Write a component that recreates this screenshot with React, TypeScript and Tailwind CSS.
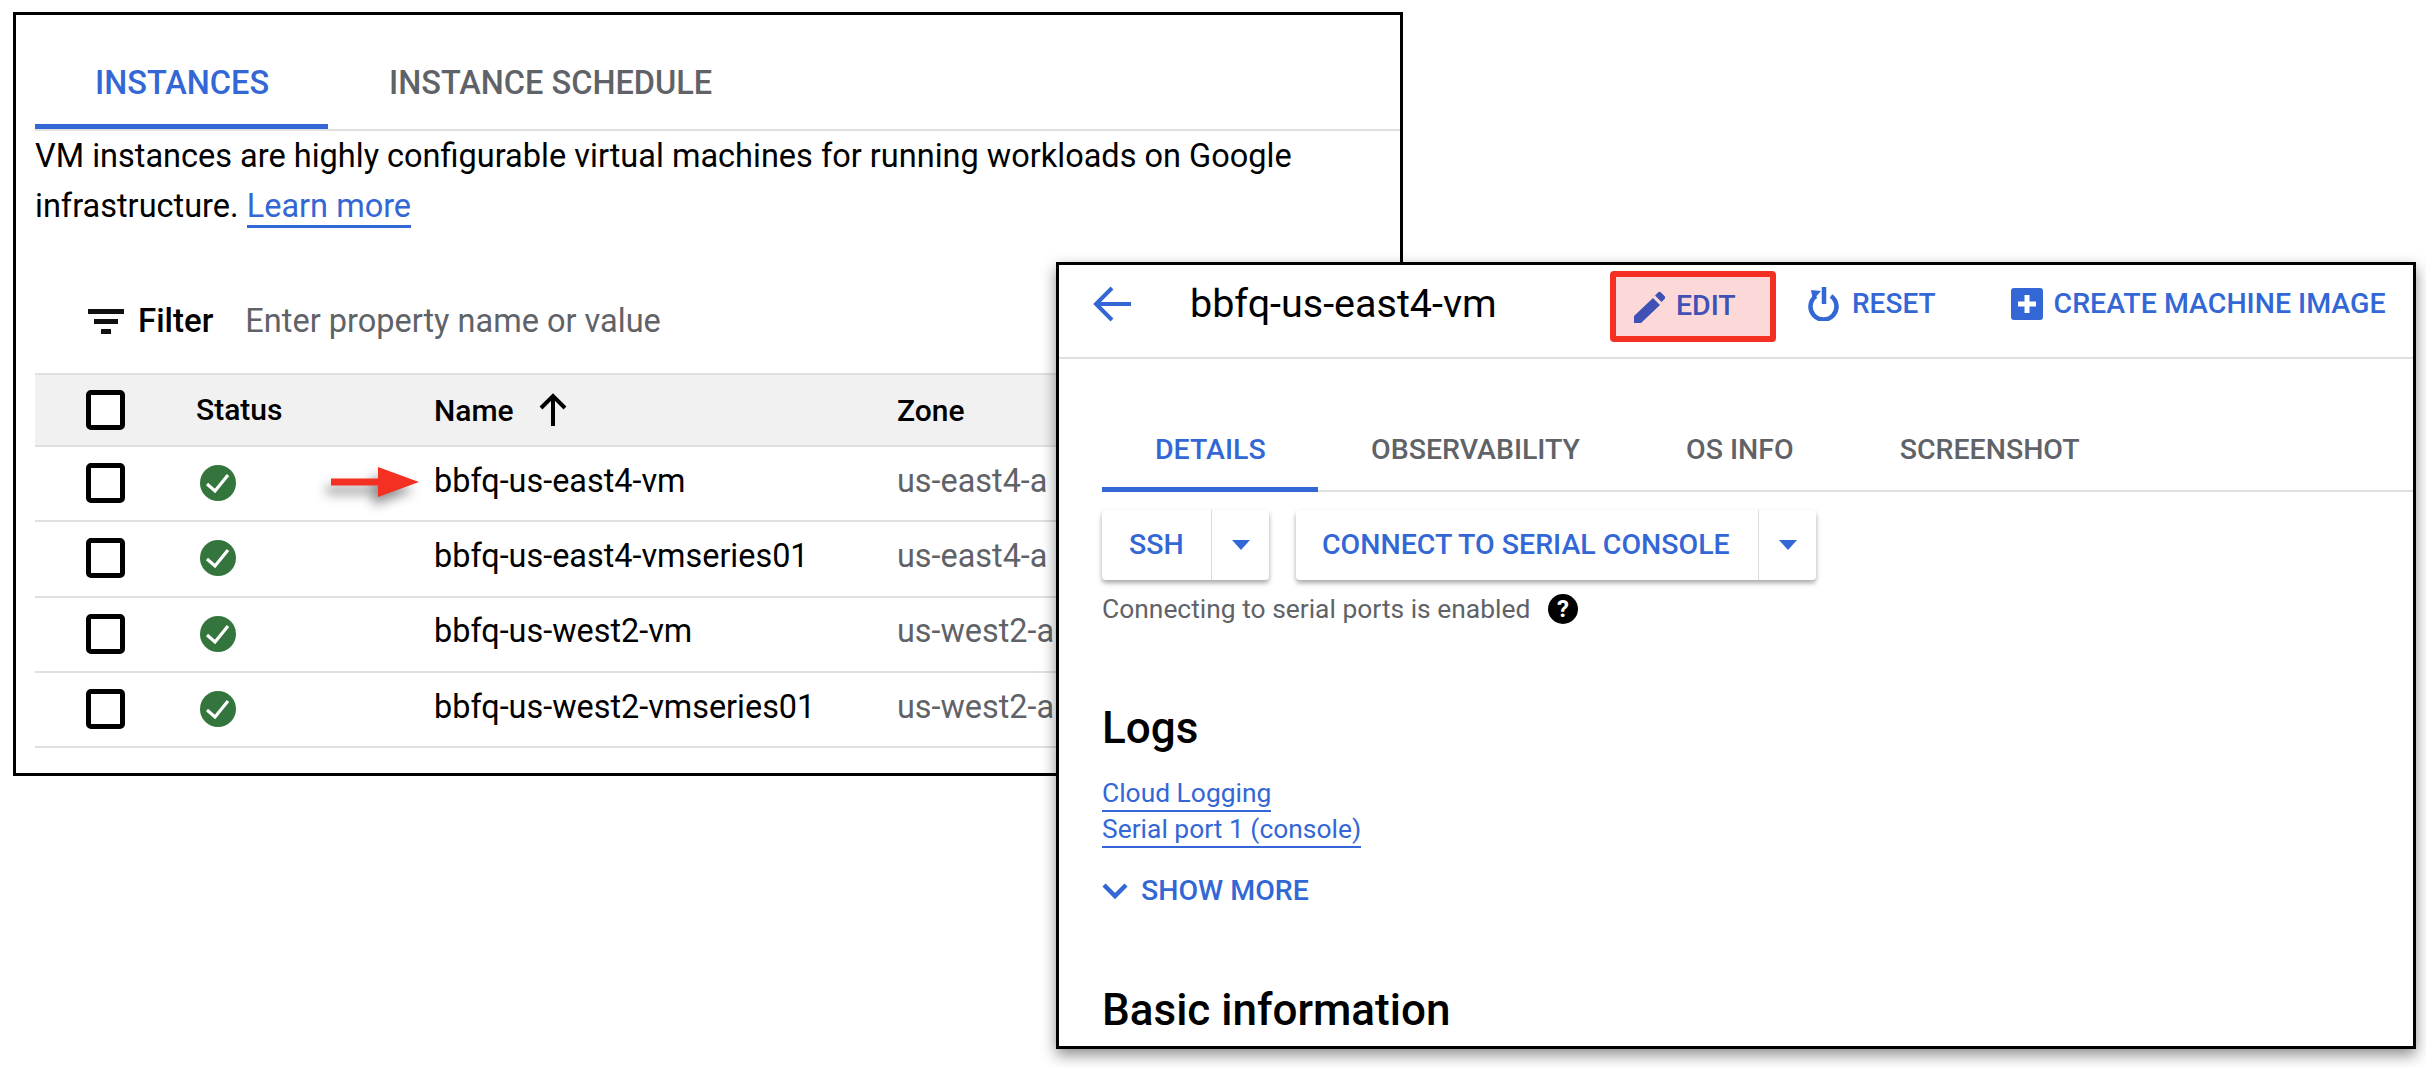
import React from "react";

const BLUE = "text-[#3367d6]";

function Checkbox() {
  return <div className="w-[39px] h-[40px] -mt-[1px] border-[5px] border-black rounded-[5px] bg-white" />;
}

function Ok() {
  return (
    <svg width="36" height="36" viewBox="0 0 36 36">
      <circle cx="18" cy="18" r="18" fill="#33753d" />
      <path d="M7 19l8 7 13-16" fill="none" stroke="#fff" strokeWidth="3.2" />
    </svg>
  );
}

function Row({ name, zone, arrow }: { name: string; zone: string; arrow?: boolean }) {
  return (
    <div className="relative flex items-center h-[75.3px] border-b-2 border-[#e0e0e0]">
      <div className="w-[165px] pl-[51px] flex"><Checkbox /></div>
      <div className="w-[234px] -mt-[1px]"><Ok /></div>
      {arrow && (
        <svg className="absolute left-[296px] top-[15px] overflow-visible drop-shadow-[-5px_8px_6px_rgba(0,0,0,0.45)]" width="90" height="40" viewBox="0 0 90 40">
          <path d="M0 16.5h47V5l41 15-41 15V23.5H0z" fill="#f33021" />
        </svg>
      )}
      <div className="w-[463px] pb-[5px] text-[32.4px] text-black whitespace-nowrap">{name}</div>
      <div className="pb-[5px] text-[32.4px] text-[#5f6368] whitespace-nowrap">{zone}</div>
    </div>
  );
}

function SplitButton({ label, w, sw, px }: { label: string; w: string; sw: string; px: string }) {
  return (
    <div className={`flex h-[70px] rounded-[4px] bg-white shadow-[0_3px_5px_rgba(0,0,0,0.35)] ${w}`}>
      <div className={`flex items-center border-r border-[#dadce0] text-[28.5px] font-medium whitespace-nowrap ${BLUE} ${sw} ${px}`}>{label}</div>
      <div className="flex-1 flex items-center justify-center">
        <svg width="18" height="10" viewBox="0 0 18 10"><path d="M0 0h18L9 10z" fill="#3367d6" /></svg>
      </div>
    </div>
  );
}

export default function App() {
  return (
    <div className="relative w-[2426px] h-[1068px] bg-white overflow-hidden font-['Roboto',sans-serif]">
      <div className="pt-[12px] pl-[13px]">
        <div className="w-[1390px] h-[764px] border-[3px] border-black pl-[19px] overflow-hidden">
          <div className="flex h-[116px] border-b-2 border-[#e0e0e0]">
            <div className={`relative w-[293px] pt-[44px] pl-[60px] text-[32.5px] font-medium ${BLUE}`}>
              INSTANCES
              <div className="absolute left-0 right-0 bottom-0 h-[5px] bg-[#3367d6]" />
            </div>
            <div className="pt-[44px] pl-[61px] text-[32.5px] font-medium text-[#5f6368]">INSTANCE SCHEDULE</div>
          </div>
          <div className="text-[32.5px] leading-[50px] text-black whitespace-nowrap">
            VM instances are highly configurable virtual machines for running workloads on Google
            <br />
            infrastructure. <span className={`${BLUE} border-b-[3px] border-[#3367d6]`}>Learn more</span>
          </div>
          <div className="flex items-center h-[142px] pl-[53px] pt-[38px]">
            <svg width="36" height="26" viewBox="0 0 36 26"><path d="M0 1h36v5H0zM6 11h24v5H6zM13 21h10v5H13z" fill="#111" /></svg>
            <span className="ml-[14px] text-[33px] font-medium text-black">Filter</span>
            <span className="ml-[32px] text-[32.5px] text-[#5f6368]">Enter property name or value</span>
          </div>
          <div className="flex items-center h-[74px] bg-[#f1f1f1] border-y-2 border-[#e0e0e0] text-[30px] font-medium text-black">
            <div className="w-[165px] pl-[51px] flex"><Checkbox /></div>
            <div className="w-[234px] -ml-[4px] pb-[1px]">Status</div>
            <div className="w-[463px] ml-[4px] flex items-center">
              Name
              <svg className="ml-[24px]" width="30" height="34" viewBox="0 0 30 34"><path d="M15 33V3M3 15L15 3l12 12" fill="none" stroke="#000" strokeWidth="4" /></svg>
            </div>
            <div>Zone</div>
          </div>
          <Row name="bbfq-us-east4-vm" zone="us-east4-a" arrow />
          <Row name="bbfq-us-east4-vmseries01" zone="us-east4-a" />
          <Row name="bbfq-us-west2-vm" zone="us-west2-a" />
          <Row name="bbfq-us-west2-vmseries01" zone="us-west2-a" />
        </div>
      </div>

      <div className="absolute left-[1056px] top-[262px] w-[1360px] h-[787px] bg-white border-[3px] border-black shadow-[0_6px_14px_rgba(0,0,0,0.45)] overflow-hidden">
        <div className="flex items-center h-[94px] pb-[14px] border-b-2 border-[#e0e0e0]">
          <svg className="ml-[34px]" width="38" height="36" viewBox="0 0 38 36"><path d="M38 18H4M19 2L3 18l16 16" fill="none" stroke="#3367d6" strokeWidth="4" /></svg>
          <span className="ml-[59px] w-[420px] text-[39.5px] text-black whitespace-nowrap">bbfq-us-east4-vm</span>
          <div className="flex items-center shrink-0 w-[166px] h-[71px] mt-[5px] bg-[#fdd8d8] border-[6px] border-[#f33021] rounded-[4px] pl-[18px]">
            <svg width="31" height="32" viewBox="0 0 31 32"><path d="M0 32v-7L19 7l7 7L7 32zM21 4.5l3-3a2 2 0 0 1 3 0l3.500 3.500a2 2 0 0 1 0 3l-3 3z" fill="#3f51b5" /></svg>
            <span className="ml-[11px] text-[28.5px] font-medium text-[#3f51b5]">EDIT</span>
          </div>
          <svg className="ml-[32px]" width="32" height="34" viewBox="0 0 32 34"><path d="M23 9a13 13 0 1 1-15 0M16 0v17" fill="none" stroke="#3367d6" strokeWidth="4.500" /><path d="M3 3l10 1-8 9z" fill="#3367d6" /></svg>
          <span className={`ml-[12px] text-[28px] font-medium ${BLUE}`}>RESET</span>
          <svg className="ml-[75px]" width="32" height="32" viewBox="0 0 32 32"><rect width="32" height="32" rx="3" fill="#3367d6" /><path d="M16 7v18M7 16h18" stroke="#fff" strokeWidth="5" /></svg>
          <span className={`ml-[11px] text-[28.5px] font-medium whitespace-nowrap ${BLUE}`}>CREATE MACHINE IMAGE</span>
        </div>

        <div className="pl-[43px]">
          <div className="flex h-[133px] pt-[70px] border-b-2 border-[#e0e0e0] text-[28.5px] font-medium text-[#5f6368]">
            <div className={`relative w-[216px] -mb-[2px] pl-[53px] ${BLUE}`}>
              DETAILS
              <div className="absolute left-0 right-0 bottom-0 h-[5px] bg-[#3367d6]" />
            </div>
            <span className="ml-[53px]">OBSERVABILITY</span>
            <span className="ml-[106px]">OS INFO</span>
            <span className="ml-[106px]">SCREENSHOT</span>
          </div>
          <div className="flex gap-[27px] mt-[18px]">
            <SplitButton label="SSH" w="w-[167px]" sw="w-[110px]" px="pl-[27px]" />
            <SplitButton label="CONNECT TO SERIAL CONSOLE" w="w-[520px]" sw="w-[463px]" px="pl-[26px]" />
          </div>
          <div className="flex items-center h-[36px] mt-[12px]">
            <span className="w-[446px] text-[26.4px] text-[#5f6368] whitespace-nowrap">Connecting to serial ports is enabled</span>
            <div className="w-[30px] h-[30px] -mt-[2px] rounded-full bg-black text-white text-[24px] font-bold flex items-center justify-center">?</div>
          </div>
          <div className="mt-[75px] text-[44px] font-medium leading-[50px] text-black">Logs</div>
          <div className={`mt-[26px] flex flex-col items-start text-[26.4px] leading-[29px] ${BLUE}`}>
            <span className="border-b-2 border-[#3367d6] h-[33px]">Cloud Logging</span>
            <span className="border-b-2 border-[#3367d6] h-[33px] mt-[3px]">Serial port 1 (console)</span>
          </div>
          <div className={`flex items-center mt-[22px] text-[28.5px] font-medium ${BLUE}`}>
            <svg width="26" height="18" viewBox="0 0 26 18"><path d="M2 3l11 11L24 3" fill="none" stroke="#3367d6" strokeWidth="4.5" /></svg>
            <span className="ml-[13px]">SHOW MORE</span>
          </div>
          <div className="mt-[72px] text-[44px] font-medium leading-[50px] text-black whitespace-nowrap">Basic information</div>
        </div>
      </div>
    </div>
  );
}
